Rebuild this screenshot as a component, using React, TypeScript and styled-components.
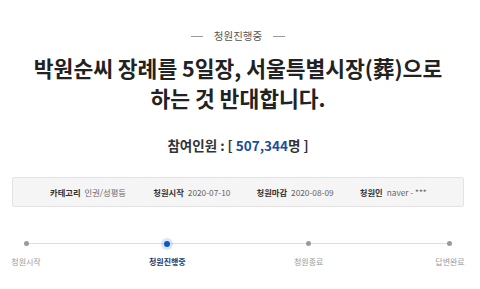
import styled, { createGlobalStyle } from "styled-components";

const GlobalStyle = createGlobalStyle`
  body {
    margin: 0;
    background: #fff;
    font-family: "Noto Sans CJK KR", "Noto Sans", sans-serif;
  }
`;

type Step = { label: string; active?: boolean };

const steps: Step[] = [
  { label: "청원시작" },
  { label: "청원진행중", active: true },
  { label: "청원종료" },
  { label: "답변완료" },
];

const info = [
  { label: "카테고리", value: "인권/성평등" },
  { label: "청원시작", value: "2020-07-10" },
  { label: "청원마감", value: "2020-08-09" },
  { label: "청원인", value: "naver - ***" },
];

const App = () => {
  return (
    <Page>
      <GlobalStyle />
      <Status>
        <Rule />
        <span>청원진행중</span>
        <Rule />
      </Status>

      <Title>
        박원순씨 장례를 5일장, 서울특별시장(葬)으로
        <br />
        하는 것 반대합니다.
      </Title>

      <Count>
        참여인원 : [ <Num>507,344</Num>명 ]
      </Count>

      <InfoBox>
        {info.map((item) => (
          <InfoItem key={item.label}>
            <InfoLabel>{item.label}</InfoLabel>
            <InfoValue>{item.value}</InfoValue>
          </InfoItem>
        ))}
      </InfoBox>

      <Progress>
        {steps.map((s) => (
          <StepCol key={s.label}>
            <DotSlot>
              <Dot $active={s.active} />
            </DotSlot>
            <StepLabel $active={s.active}>{s.label}</StepLabel>
          </StepCol>
        ))}
      </Progress>
    </Page>
  );
};

export default App;

const Page = styled.div`
  width: 476px;
  height: 289px;
  padding-top: 28px;
  box-sizing: border-box;
  display: flex;
  flex-direction: column;
  align-items: center;
`;

const Status = styled.div`
  display: flex;
  align-items: center;
  gap: 11px;
  font-size: 10.5px;
  line-height: 16px;
  color: #555;
`;

const Rule = styled.i`
  display: block;
  width: 12px;
  height: 1px;
  background: #999;
`;

const Title = styled.h1`
  margin: 9px 0 0;
  font-size: 21.5px;
  line-height: 30px;
  font-weight: 700;
  color: #222;
  text-align: center;
  white-space: nowrap;
`;

const Count = styled.div`
  margin-top: 22px;
  font-size: 13.5px;
  line-height: 20px;
  font-weight: 700;
  color: #333;
`;

const Num = styled.span`
  color: #1d4c9c;
`;

const InfoBox = styled.div`
  margin-top: 22px;
  width: 452px;
  height: 30px;
  box-sizing: border-box;
  padding-left: 37px;
  display: flex;
  align-items: center;
  background: #f5f5f5;
  border: 1px solid #e3e3e3;
  border-radius: 2px;
`;

const InfoItem = styled.div`
  width: 104px;
  display: flex;
  align-items: center;
  gap: 4px;
  font-size: 8.3px;
  line-height: 12px;
`;

const InfoLabel = styled.span`
  font-weight: 700;
  color: #333;
`;

const InfoValue = styled.span`
  color: #666;
`;

const Progress = styled.div`
  margin-top: 31px;
  width: 424px;
  display: flex;
  justify-content: space-between;
  background: linear-gradient(#dedede, #dedede) 0 5px / 100% 1px no-repeat;
`;

const StepCol = styled.div`
  width: 0;
  display: flex;
  flex-direction: column;
  align-items: center;
  gap: 7px;
`;

const DotSlot = styled.div`
  height: 11px;
  display: flex;
  align-items: center;
`;

const Dot = styled.span<{ $active?: boolean }>`
  display: block;
  width: ${(p) => (p.$active ? "6px" : "5px")};
  height: ${(p) => (p.$active ? "6px" : "5px")};
  border-radius: 50%;
  background: ${(p) => (p.$active ? "#0b59c9" : "#9a9a9a")};
  box-shadow: ${(p) => (p.$active ? "0 0 0 3px rgba(11, 89, 201, 0.15)" : "none")};
`;

const StepLabel = styled.span<{ $active?: boolean }>`
  white-space: nowrap;
  font-size: 8px;
  line-height: 12px;
  font-weight: ${(p) => (p.$active ? 700 : 400)};
  color: ${(p) => (p.$active ? "#1f3a6e" : "#999")};
`;
